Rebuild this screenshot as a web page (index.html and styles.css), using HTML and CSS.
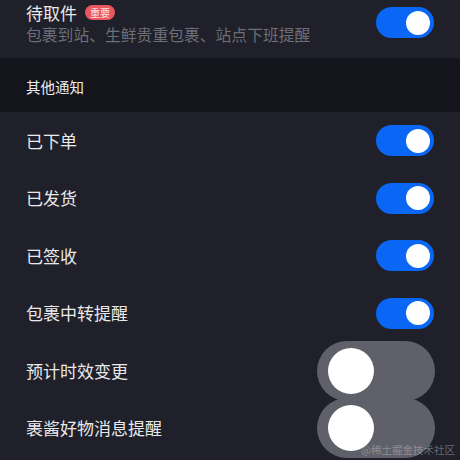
FILE: index.html
```html
<html>
    <head>
        <link rel="stylesheet" href="styles.css">
    </head>
    <body>
        <div class="setting first">
            <div class="info">
                <div class="title">待取件 <span class="badge">重要</span></div>
                <div class="desc">包裹到站、生鲜贵重包裹、站点下班提醒</div>
            </div>
            <div class="switch on"><span class="knob"></span></div>
        </div>
        <div class="section">其他通知</div>
        <div class="setting">
            <div class="title">已下单</div>
            <div class="switch on"><span class="knob"></span></div>
        </div>
        <div class="setting">
            <div class="title">已发货</div>
            <div class="switch on"><span class="knob"></span></div>
        </div>
        <div class="setting">
            <div class="title">已签收</div>
            <div class="switch on"><span class="knob"></span></div>
        </div>
        <div class="setting">
            <div class="title">包裹中转提醒</div>
            <div class="switch on"><span class="knob"></span></div>
        </div>
        <div class="setting">
            <div class="title">预计时效变更</div>
            <div class="switch off"><span class="knob"></span></div>
        </div>
        <div class="setting">
            <div class="title">裹酱好物消息提醒</div>
            <div class="switch off"><span class="knob"></span></div>
        </div>
        <div class="watermark">@稀土掘金技术社区</div>
    </body>
</html>
```

FILE: styles.css
```css
/* dark notification settings */
body {
    margin: 0;
    height: 460px;
    overflow: hidden;
    position: relative;
    font-family: "Noto Sans CJK SC", "Noto Sans", sans-serif;
    background: #1f2029;
    color: #e9e9ec;
}

.setting {
    display: flex;
    align-items: center;
    justify-content: space-between;
    height: 57.5px;
    padding: 0 26px;
}

.setting.first {
    height: 58px;
    align-items: flex-start;
    box-sizing: border-box;
    padding-top: 0;
}

.setting.first .switch {
    margin-top: 7px;
}

.title {
    font-size: 17px;
    line-height: 22px;
    display: flex;
    align-items: center;
}

.first .title {
    line-height: 25px;
}

.desc {
    font-size: 15.8px;
    line-height: 20px;
    color: #6c6e78;
}

.badge {
    display: inline-block;
    margin-left: 8px;
    width: 30px;
    height: 15px;
    line-height: 15px;
    border-radius: 8px;
    background: #e8585e;
    color: #fbe3e4;
    font-size: 10px;
    text-align: center;
}

.section {
    background: #14151c;
    height: 54px;
    box-sizing: border-box;
    padding: 19px 26px 0;
    font-size: 14.5px;
    line-height: 20px;
    color: #ececef;
}

.switch {
    display: flex;
    align-items: center;
    flex-shrink: 0;
}

.switch.on {
    width: 58px;
    height: 31px;
    border-radius: 16px;
    background: #0a66f5;
    justify-content: flex-end;
    box-sizing: border-box;
    padding-right: 4px;
}

.switch.on .knob {
    width: 24px;
    height: 24px;
    border-radius: 50%;
    background: #ffffff;
}

.switch.off {
    width: 118px;
    height: 60px;
    border-radius: 30px;
    background: #5f6069;
    box-sizing: border-box;
    padding-left: 11px;
    margin-right: -1px;
}

.switch.off .knob {
    width: 46px;
    height: 46px;
    border-radius: 50%;
    background: #ffffff;
}

.watermark {
    position: absolute;
    right: 5px;
    bottom: 3px;
    font-size: 10.5px;
    line-height: 14px;
    color: rgba(200, 200, 205, 0.45);
}
```
